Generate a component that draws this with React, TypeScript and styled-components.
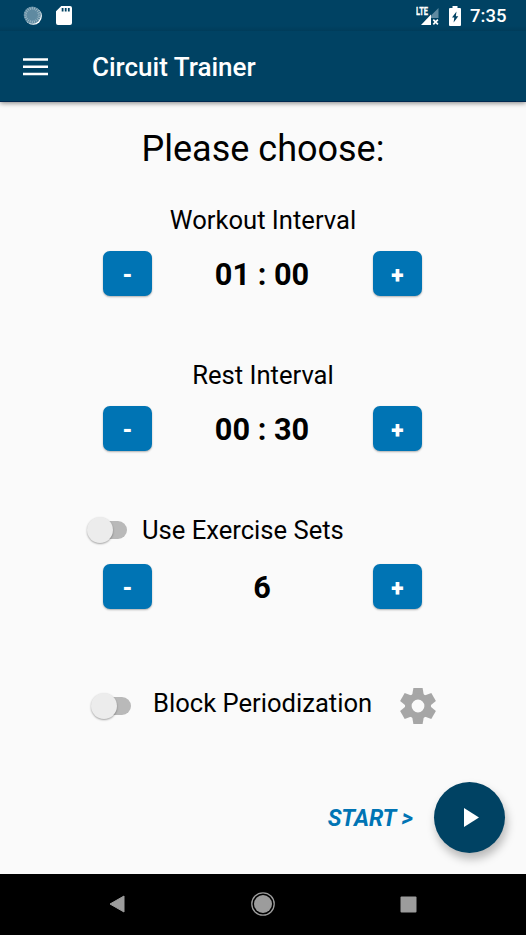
import React from 'react';
import styled, { createGlobalStyle } from 'styled-components';

const GlobalStyle = createGlobalStyle`
  * { box-sizing: border-box; }
  body { margin: 0; background: #fafafa; }
  svg { display: block; flex: none; }
`;

const Screen = styled.div`
  width: 526px;
  height: 935px;
  display: flex;
  flex-direction: column;
  overflow: hidden;
  background: #fafafa;
  color: #000;
  font-family: Roboto, sans-serif;
`;

const StatusBar = styled.div`
  height: 31px;
  flex: none;
  display: flex;
  align-items: center;
  padding: 0 20px 0 23px;
  color: #fff;
  background: linear-gradient(#004263 26px, #003c5a 31px);
`;

const StatusGroup = styled.div<{ $end?: boolean }>`
  display: flex;
  align-items: center;
  gap: ${(p) => (p.$end ? '9px' : '13px')};
  margin-left: ${(p) => (p.$end ? 'auto' : '0')};
`;

const Clock = styled.span`
  font-size: 18.5px;
  font-weight: 500;
  line-height: 29px;
  padding-top: 2px;
  width: 36px;
  white-space: nowrap;
`;

const AppBar = styled.header`
  height: 71px;
  flex: none;
  display: flex;
  align-items: center;
  gap: 44px;
  padding: 1px 23px 0;
  color: #fff;
  background: #004263;
  border-bottom: 1px solid #002850;
  box-shadow: 0 1px 5px rgba(0, 0, 0, 0.5);
  clip-path: inset(0 0 -10px 0);
`;

const MenuButton = styled.button`
  padding: 0;
  border: 0;
  background: none;
  color: inherit;
`;

const Title = styled.h1`
  margin: 0;
  font-size: 26px;
  line-height: 30px;
  font-weight: 500;
`;

const Content = styled.main`
  flex: 1;
  display: flex;
  flex-direction: column;
  padding-top: 25px;
`;

const Heading = styled.h2`
  margin: 0 0 27px;
  font-size: 36px;
  line-height: 44px;
  font-weight: 400;
  text-align: center;
`;

const Section = styled.section<{ $height: number }>`
  height: ${(p) => p.$height}px;
  flex: none;
`;

const Label = styled.div`
  font-size: 25.6px;
  line-height: 44px;
  text-align: center;
  white-space: nowrap;
`;

const IntervalLabel = styled(Label)`
  height: 53px;
`;

const Stepper = styled.div`
  width: 319px;
  height: 45px;
  margin: 0 auto 0 103px;
  display: flex;
  align-items: flex-start;
  justify-content: space-between;
`;

const StepButton = styled.button`
  width: 49px;
  height: 45px;
  padding: 4px 0 0;
  border: 0;
  border-radius: 7px;
  background: #0074b4;
  box-shadow: 0 1px 2px rgba(0, 0, 0, 0.3);
  color: #fff;
  font: 900 23px/41px Roboto, sans-serif;
`;

const Value = styled.output`
  font-size: 30.7px;
  line-height: 45px;
  font-weight: 700;
  padding: 1px 1px 0 0;
`;

const SwitchRow = styled.div<{ $indent: number; $gap: number }>`
  height: 56px;
  display: flex;
  align-items: flex-start;
  gap: ${(p) => p.$gap}px;
  padding-left: ${(p) => p.$indent}px;
`;

const Track = styled.button<{ $top: number }>`
  width: 32px;
  height: 18px;
  flex: none;
  margin-top: ${(p) => p.$top}px;
  margin-right: 1px;
  padding: 0;
  border: 0;
  border-radius: 9px;
  background: #b9b9b9;
  display: flex;
  align-items: center;
`;

const Thumb = styled.span`
  width: 26px;
  height: 26px;
  flex: none;
  margin-left: -8px;
  border-radius: 50%;
  background: #ececec;
  box-shadow: 0 1px 2px rgba(0, 0, 0, 0.35);
`;

const GearButton = styled(MenuButton)`
  color: #a6a6a6;
  margin: 7px 0 0 7px;
`;

const StartRow = styled.div`
  display: flex;
  align-items: center;
  justify-content: flex-end;
  gap: 21px;
  padding-right: 21px;
`;

const StartLabel = styled.span`
  color: #0074b4;
  font-size: 23px;
  line-height: 30px;
  font-weight: 700;
  font-style: italic;
  padding-top: 3px;
`;

const PlayButton = styled.button`
  width: 71px;
  height: 71px;
  padding: 0 0 0 4px;
  border: 0;
  border-radius: 50%;
  background: #004263;
  color: #fff;
  display: flex;
  align-items: center;
  justify-content: center;
  box-shadow: 2px 6px 10px rgba(0, 0, 0, 0.27);
`;

const NavBar = styled.nav`
  height: 61px;
  flex: none;
  display: flex;
  align-items: center;
  justify-content: space-between;
  padding: 0 109px 1px;
  background: #000;
  color: #9c9c9c;
`;

const TICKS = Array.from({ length: 20 }, (_, i) => i * 18);
const TEETH = Array.from({ length: 6 }, (_, i) => i * 60);

function SyncIcon() {
  return (
    <svg width="20" height="20" viewBox="0 0 20 20">
      <circle cx="10.3" cy="10.1" r="8.600" fill="#fff" />
      <circle cx="9.300" cy="9.100" r="8.600" fill="#5f8aa1" />
      {TICKS.map((a) => (
        <path key={a} d="M9.300 1v2.500" stroke="#a0bac7" strokeWidth="0.900" transform={`rotate(${a} 9.3 9.1)`} />
      ))}
    </svg>
  );
}

function CardIcon() {
  return (
    <svg width="16" height="19" viewBox="0 0 16 19">
      <path fill="#fff" fillRule="evenodd" d="M5.3 0H14a2 2 0 0 1 2 2v15a2 2 0 0 1-2 2H2a2 2 0 0 1-2-2V5.3zM5.7 2v3.5h1.8V2zM8.8 2v3.5h1.8V2zM11.9 2v3.5h1.8V2z" />
    </svg>
  );
}

function GearIcon() {
  return (
    <svg width="36" height="36" viewBox="0 0 36 36" fill="currentColor">
      {TEETH.map((a) => (
        <path key={a} d="M13.400 0h9.200l1.200 7H12.200z" transform={`rotate(${a} 18 18)`} />
      ))}
      <path fillRule="evenodd" d="M18 5a13 13 0 1 0 0 26a13 13 0 1 0 0-26zM18 11.600a6.400 6.400 0 1 1 0 12.800a6.400 6.400 0 1 1 0-12.800z" />
    </svg>
  );
}

const LteText = styled.text`
  font: 700 11px Roboto, sans-serif;
`;

function SignalIcon() {
  return (
    <svg width="24" height="20" viewBox="0 0 24 20">
      <path d="M15 9.500L22.500 2v10H15z" fill="#5f8aa1" />
      <path d="M15 8.500v10.500H5z" fill="#fff" />
      <path d="M17.300 13.700l4.600 4.600M21.900 13.700l-4.600 4.600" stroke="#fff" strokeWidth="1.700" />
      <LteText x="0" y="9" fill="#fff" stroke="#fff" strokeWidth="0.300" textLength="12" lengthAdjust="spacingAndGlyphs">LTE</LteText>
    </svg>
  );
}

function BatteryIcon() {
  return (
    <svg width="12" height="20" viewBox="0 0 12 20">
      <path fill="#fff" fillRule="evenodd" d="M3.5 0h5v2H11a1 1 0 0 1 1 1v16a1 1 0 0 1-1 1H1a1 1 0 0 1-1-1V3a1 1 0 0 1 1-1h2.500zM7.500 5.500L3 11.500h2.300L4.600 16.500 9.300 10.200H6.800z" />
    </svg>
  );
}

function Counter({ value }: { value: string }) {
  return (
    <Stepper>
      <StepButton>-</StepButton>
      <Value>{value}</Value>
      <StepButton>+</StepButton>
    </Stepper>
  );
}

function Toggle({ top }: { top: number }) {
  return (
    <Track role="switch" aria-checked="false" $top={top}>
      <Thumb />
    </Track>
  );
}

export default function App() {
  return (
    <>
      <GlobalStyle />
      <Screen>
        <StatusBar>
          <StatusGroup>
            <SyncIcon />
            <CardIcon />
          </StatusGroup>
          <StatusGroup $end>
            <SignalIcon />
            <BatteryIcon />
            <Clock>7:35</Clock>
          </StatusGroup>
        </StatusBar>
        <AppBar>
          <MenuButton aria-label="Menu">
            <svg width="25" height="18" viewBox="0 0 25 18">
              <path d="M0 1.500h25M0 8.700h25M0 15.900h25" stroke="#fff" strokeWidth="2.500" />
            </svg>
          </MenuButton>
          <Title>Circuit Trainer</Title>
        </AppBar>
        <Content>
          <Heading>Please choose:</Heading>
          <Section $height={155}>
            <IntervalLabel>Workout Interval</IntervalLabel>
            <Counter value="01 : 00" />
          </Section>
          <Section $height={155}>
            <IntervalLabel>Rest Interval</IntervalLabel>
            <Counter value="00 : 30" />
          </Section>
          <Section $height={173}>
            <SwitchRow $indent={95} $gap={14}>
              <Toggle top={13} />
              <Label>Use Exercise Sets</Label>
            </SwitchRow>
            <Counter value="6" />
          </Section>
          <Section $height={101}>
            <SwitchRow $indent={99} $gap={21}>
              <Toggle top={16} />
              <Label>Block Periodization</Label>
              <GearButton aria-label="Settings">
                <GearIcon />
              </GearButton>
            </SwitchRow>
          </Section>
          <StartRow>
            <StartLabel>START &gt;</StartLabel>
            <PlayButton aria-label="Start">
              <svg width="15" height="19" viewBox="0 0 15 19">
                <path d="M0 0l15 9.500L0 19z" fill="#fff" />
              </svg>
            </PlayButton>
          </StartRow>
        </Content>
        <NavBar>
          <svg width="16" height="18" viewBox="0 0 16 18">
            <path d="M15 1v16L1 9z" fill="currentColor" stroke="currentColor" strokeLinejoin="round" />
          </svg>
          <svg width="24" height="24" viewBox="0 0 24 24">
            <circle cx="12" cy="12" r="11.200" fill="none" stroke="currentColor" strokeWidth="1.300" />
            <circle cx="12" cy="12" r="9" fill="currentColor" />
          </svg>
          <svg width="17" height="17" viewBox="0 0 17 17">
            <rect x="0.500" y="0.500" width="16" height="16" rx="1" fill="currentColor" />
          </svg>
        </NavBar>
      </Screen>
    </>
  );
}
